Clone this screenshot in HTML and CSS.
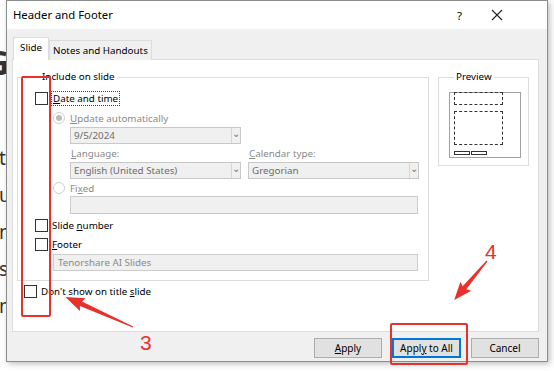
FILE: index.html
```html
<!DOCTYPE html>
<html lang="en">
<head>
    <meta charset="UTF-8">
    <title>Header and Footer</title>
    <link rel="stylesheet" href="styles.css">
</head>
<body>
    <div class="desktop">
        <div class="slide-behind">
            <div class="big">G</div>
            <div class="line l1">tr</div>
            <div class="line">u</div>
            <div class="line">n</div>
            <div class="line">s</div>
            <div class="line">n</div>
        </div>

        <div class="dialog">
            <div class="titlebar">
                <span class="title">Header and Footer</span>
                <span class="help">?</span>
                <svg class="close" width="12" height="12" viewBox="0 0 12 12">
                    <path d="M1 1 L11 11 M11 1 L1 11" stroke="#222" stroke-width="1.1" fill="none"/>
                </svg>
            </div>

            <div class="body">
                <div class="tabs">
                    <div class="tab active">Slide</div>
                    <div class="tab">Notes and Handouts</div>
                </div>

                <div class="panel">
                    <div class="groups">
                        <fieldset class="group include">
                            <legend>Include on slide</legend>

                            <div class="row check-row first">
                                <span class="checkbox"></span>
                                <span class="focus"><u>D</u>ate and time</span>
                            </div>
                            <div class="row radio-row sub">
                                <span class="radio"><span class="dot"></span></span>
                                <span class="dim"><u>U</u>pdate automatically</span>
                            </div>
                            <div class="select date-select">
                                <span class="value">9/5/2024</span>
                                <span class="arrow">&#8964;</span>
                            </div>
                            <div class="labels">
                                <span class="lab lang"><u>L</u>anguage:</span>
                                <span class="lab"><u>C</u>alendar type:</span>
                            </div>
                            <div class="selects">
                                <div class="select">
                                    <span class="value">English (United States)</span>
                                    <span class="arrow">&#8964;</span>
                                </div>
                                <div class="select">
                                    <span class="value">Gregorian</span>
                                    <span class="arrow">&#8964;</span>
                                </div>
                            </div>
                            <div class="row radio-row sub fixed">
                                <span class="radio"></span>
                                <span class="dim">Fi<u>x</u>ed</span>
                            </div>
                            <div class="input fixed-input"></div>
                            <div class="row check-row num">
                                <span class="checkbox"></span>
                                <span>Slide <u>n</u>umber</span>
                            </div>
                            <div class="row check-row foot">
                                <span class="checkbox"></span>
                                <span><u>F</u>ooter</span>
                            </div>
                            <div class="input footer-input">Tenorshare AI Slides</div>
                        </fieldset>

                        <fieldset class="group preview">
                            <legend>Preview</legend>
                            <div class="thumb">
                                <div class="ph head"></div>
                                <div class="ph main"></div>
                                <div class="foot-bars">
                                    <span></span><span></span>
                                </div>
                            </div>
                        </fieldset>
                    </div>

                    <div class="row check-row title-check">
                        <span class="checkbox"></span>
                        <span>Don't show on title <u>s</u>lide</span>
                    </div>
                </div>

                <div class="buttons">
                    <button class="btn"><u>A</u>pply</button>
                    <button class="btn default">Appl<u>y</u> to All</button>
                    <button class="btn">Cancel</button>
                </div>
            </div>
        </div>

        <!-- red annotations drawn over the screenshot -->
        <div class="mark mark-left"></div>
        <div class="mark mark-apply"></div>
        <span class="num-label n3">3</span>
        <span class="num-label n4">4</span>
        <svg class="arrows" width="554" height="371" viewBox="0 0 554 371">
            <g transform="translate(133 327) rotate(204)">
                <polygon points="0,-0.6 57,-2.4 55,-7 74,0 55,7 57,2.4 0,0.6" fill="#e8312a"/>
            </g>
            <g transform="translate(487 261) rotate(130)">
                <polygon points="0,-0.6 35,-2.4 33,-7 51,0 33,7 35,2.4 0,0.6" fill="#e8312a"/>
            </g>
        </svg>
    </div>
</body>
</html>
```

FILE: styles.css
```css
:root {
    --face: #f0f0f0;
    --line: #dcdcdc;
    --dim: #8a8a8a;
    --red: #e8312a;
}

* {
    margin: 0;
    padding: 0;
    box-sizing: border-box;
}

body {
    font-family: "Noto Sans", "Open Sans", Arial, sans-serif;
    font-size: 9.8px;
    color: #000;
    background: #fff;
}

u {
    text-decoration: underline;
    text-underline-offset: 1px;
}

.desktop {
    position: relative;
    width: 554px;
    height: 371px;
    overflow: hidden;
    background: #fff;
}

/* slide text peeking out left of the dialog */
.slide-behind {
    padding-top: 44px;
    margin-left: -1px;
    color: #333;
    font-size: 19px;
    line-height: 37px;
}

.slide-behind .big {
    font-size: 34px;
    font-weight: 700;
    margin-left: -14px;
    line-height: 36px;
    margin-bottom: 60px;
}

/* ---- dialog window ---- */
.dialog {
    position: absolute;
    left: 6px;
    top: 0;
    width: 542px;
    height: 362px;
    border: 1px solid #8c8c8c;
    background: var(--face);
    box-shadow: 2px 2px 6px rgba(0,0,0,0.25);
    display: flex;
    flex-direction: column;
}

.titlebar {
    height: 28px;
    background: #fff;
    display: flex;
    align-items: center;
    padding-left: 6px;
}

.title {
    font-size: 11.3px;
    flex: 1;
    padding-bottom: 2px;
}

.help {
    font-size: 11.5px;
    margin-right: 29px;
}

.close {
    margin-right: 44px;
}

.body {
    flex: 1;
    display: flex;
    flex-direction: column;
    padding: 8px 8px 0 5px;
}

.tabs {
    display: flex;
    align-items: flex-end;
    height: 23px;
    position: relative;
    z-index: 1;
}

.tab {
    height: 20px;
    padding: 0 3px;
    border: 1px solid var(--line);
    border-bottom: none;
    background: var(--face);
    line-height: 19px;
}

.tab.active {
    height: 23px;
    background: #fff;
    padding: 0 6px;
    margin-left: 1px;
    line-height: 20px;
}

.panel {
    height: 273px;
    margin-top: -1px;
    background: #fff;
    border: 1px solid var(--line);
    padding: 10px 0 0 4px;
}

.groups {
    display: flex;
    gap: 9px;
    align-items: flex-start;
}

.group {
    border: 1px solid var(--line);
}

.group legend {
    margin-left: 5px;
    padding: 0 2px;
    line-height: 14px;
}

.include {
    width: 412px;
    padding: 0 9px 9px 17px;
}

.row {
    display: flex;
    align-items: center;
    height: 14px;
}

.check-row .checkbox {
    width: 13px;
    height: 13px;
    border: 1px solid #333;
    background: #fff;
    margin-right: 4px;
    flex-shrink: 0;
}

.focus {
    outline: 1px dotted #444;
    outline-offset: 0;
    padding: 0 1px;
    line-height: 13px;
}

.first {
    margin-top: 7px;
}

.sub {
    margin-left: 18px;
}

.radio-row {
    margin-top: 6px;
}

.radio {
    width: 12px;
    height: 12px;
    border-radius: 50%;
    border: 1px solid #cfcfcf;
    background: #fff;
    margin-right: 5px;
    display: flex;
    align-items: center;
    justify-content: center;
}

.radio .dot {
    width: 6px;
    height: 6px;
    border-radius: 50%;
    background: #bcbcbc;
}

.dim {
    color: var(--dim);
}

.select {
    width: 171px;
    height: 17px;
    border: 1px solid #c8c8c8;
    background: var(--face);
    display: flex;
    align-items: center;
}

.select .value {
    flex: 1;
    padding-left: 3px;
    color: #6d6d6d;
    line-height: 15px;
}

.select .arrow {
    width: 9px;
    height: 15px;
    border-left: 1px solid #d6d6d6;
    color: #777;
    font-size: 10px;
    line-height: 10px;
    text-align: center;
}

.date-select {
    margin: 2px 0 0 35px;
}

.labels {
    display: flex;
    margin: 2px 0 0 36px;
    height: 15px;
    line-height: 15px;
    color: var(--dim);
}

.lab.lang {
    width: 178px;
}

.selects {
    display: flex;
    gap: 7px;
    margin: 1px 0 0 35px;
}

.fixed {
    margin-top: 2px;
}

.input {
    height: 18px;
    border: 1px solid #cccccc;
    background: var(--face);
    color: #8a8a8a;
    padding-left: 4px;
    line-height: 16px;
}

.fixed-input {
    margin: 1px 0 0 35px;
    width: 348px;
}

.num {
    margin-top: 4px;
}

.foot {
    margin-top: 5px;
}

.footer-input {
    margin: 3px 0 0 18px;
    width: 365px;
    height: 17px;
    line-height: 15px;
}

.preview {
    width: 91px;
    height: 96px;
    padding: 0 0 0 10px;
}

.thumb {
    width: 72px;
    height: 66px;
    margin-top: 8px;
    border: 1px solid #a0a0a0;
    padding: 0 0 0 4px;
}

.ph {
    border: 1px dashed #333;
    width: 49px;
}

.ph.head {
    height: 13px;
    margin-top: -1px;
}

.ph.main {
    height: 34px;
    margin-top: 6px;
}

.foot-bars {
    display: flex;
    gap: 1px;
    margin-top: 6px;
}

.foot-bars span {
    width: 16px;
    height: 4px;
    border: 1px solid #333;
}

.title-check {
    margin: 3px 0 0 7px;
}

.buttons {
    display: flex;
    justify-content: flex-end;
    gap: 10px;
    margin-top: 6px;
}

.btn {
    width: 68px;
    height: 20px;
    border: 1px solid #adadad;
    background: #e1e1e1;
    font-family: inherit;
    font-size: 10px;
    color: #000;
}

.btn.default {
    width: 69px;
    border: 2px solid #0078d7;
}

/* ---- annotations ---- */
.mark {
    position: absolute;
    border: 2.5px solid var(--red);
    border-radius: 2px;
}

.mark-left {
    left: 21px;
    top: 76px;
    width: 30px;
    height: 241px;
}

.mark-apply {
    left: 390px;
    top: 323px;
    width: 78px;
    height: 42px;
}

.num-label {
    position: absolute;
    color: var(--red);
    font-family: "Liberation Sans", Arial, sans-serif;
    font-size: 21px;
    line-height: 21px;
}

.n3 {
    left: 140px;
    top: 332px;
}

.n4 {
    left: 485px;
    top: 241px;
}

.arrows {
    position: absolute;
    left: 0;
    top: 0;
    pointer-events: none;
}
```
